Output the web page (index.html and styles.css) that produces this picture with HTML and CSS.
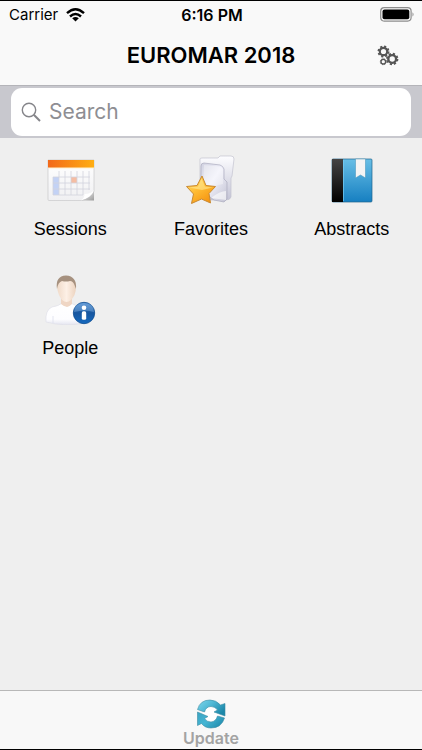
FILE: index.html
```html
<!DOCTYPE html>
<html lang="en">
<head>
    <meta charset="UTF-8">
    <meta name="viewport" content="width=device-width, initial-scale=1.0">
    <title>EUROMAR 2018</title>
    <link rel="stylesheet" href="styles.css">
</head>
<body>
    <div class="app">
        <header class="header">
            <div class="status-bar">
                <div class="carrier">
                    <span>Carrier</span>
                    <svg class="wifi" viewBox="0 0 19 14" aria-hidden="true">
                        <g fill="none" stroke="#000" stroke-width="2.4">
                            <path d="M1 5.2Q9.5-2.6 18 5.2"/>
                            <path d="M4 8.5Q9.5 3.4 15 8.5"/>
                        </g>
                        <path d="M6.2 10.3Q9.5 7.6 12.8 10.3L9.5 13.5Z"/>
                    </svg>
                </div>
                <span class="time">6:16 PM</span>
                <svg class="battery" viewBox="0 0 35 15" aria-hidden="true">
                    <rect x="0.7" y="0.7" width="30.4" height="13.4" rx="3.5" fill="none" stroke="#8d8d8d" stroke-width="1.2"/>
                    <rect x="2.5" y="2.5" width="26.8" height="9.8" rx="2"/>
                    <path d="M32.5 5.2Q34.6 7.4 32.5 9.7Z" fill="#8d8d8d"/>
                </svg>
            </div>
            <div class="title-bar">
                <h1>EUROMAR 2018</h1>
                <button class="settings-button" type="button" aria-label="Settings">
                    <svg viewBox="0 0 24 24" fill="none" stroke="#555" aria-hidden="true">
                        <circle cx="7.5" cy="7.5" r="3.7" stroke-width="2.2"/>
                        <circle cx="7.5" cy="7.5" r="5.1" stroke-width="1.8" stroke-dasharray="2.1 1.905"/>
                        <circle cx="16.2" cy="15" r="3.9" stroke-width="2.4"/>
                        <circle cx="16.2" cy="15" r="5.3" stroke-width="1.8" stroke-dasharray="2.2 1.963"/>
                        <circle cx="7.3" cy="17.7" r="2.3" stroke-width="1.3"/>
                        <circle cx="7.3" cy="17.7" r="3" stroke-width="1" stroke-dasharray="1.178 1.178"/>
                    </svg>
                </button>
            </div>
        </header>

        <form class="search-bar">
            <label class="search-field">
                <svg viewBox="0 0 20 20" fill="none" stroke="#85858a" aria-hidden="true">
                    <circle cx="8" cy="8" r="6.7" stroke-width="1.4"/>
                    <path d="M12.8 12.8L19 19" stroke-width="2"/>
                </svg>
                <input type="search" placeholder="Search" aria-label="Search">
            </label>
        </form>

        <main class="menu">
            <a class="menu-item" href="#sessions">
                <svg viewBox="0 0 52 52" aria-hidden="true">
                    <defs>
                        <linearGradient id="orange">
                            <stop offset="0" stop-color="#f2691a"/>
                            <stop offset="1" stop-color="#ffae12"/>
                        </linearGradient>
                        <linearGradient id="paper" x2="0" y2="1">
                            <stop offset="0" stop-color="#fff"/>
                            <stop offset="1" stop-color="#f0f0f2"/>
                        </linearGradient>
                        <linearGradient id="curl" x1="0" y1="0" x2="1" y2="1">
                            <stop offset="0" stop-color="#fff"/>
                            <stop offset="1" stop-color="#9a9a9a"/>
                        </linearGradient>
                    </defs>
                    <path d="M4 6H50V37Q49 44 38 46.5H5Q4 46.5 4 45.5Z" fill="url(#paper)" stroke="#c8c8ca" stroke-width="0.7"/>
                    <path d="M4 6H50V14H4Z" fill="url(#orange)"/>
                    <path d="M4 14H50" stroke="#fff0cc"/>
                    <path d="M9 23H15V41H9Z" fill="#c3d2f5"/>
                    <path d="M27 23H33V29H27Z" fill="#f5bda3"/>
                    <path d="M15 17V41M21 17V41M27 17V41M33 17V41M39 17V41M45 17V36M9 23H46M9 29H46M9 35H46M9 41H39M9 23V41" fill="none" stroke="#d2d3dd" stroke-width="0.8"/>
                    <path d="M50 36Q48 43 37 46.5Q41 43 40.5 40Q47 40 50 36Z" fill="#fff"/>
                    <path d="M50 37V46.5H37Q47 44 50 37Z" fill="url(#curl)"/>
                </svg>
                <span>Sessions</span>
            </a>
            <a class="menu-item" href="#favorites">
                <svg viewBox="0 0 52 52" aria-hidden="true">
                    <defs>
                        <linearGradient id="folder" x1="0" y1="0" x2="1" y2="1">
                            <stop offset="0" stop-color="#d0d1e0"/>
                            <stop offset="0.45" stop-color="#f0f0fa"/>
                            <stop offset="1" stop-color="#c2c2d2"/>
                        </linearGradient>
                        <linearGradient id="folder-back" x2="0" y2="1">
                            <stop offset="0" stop-color="#fdfdff"/>
                            <stop offset="1" stop-color="#c4c4d6"/>
                        </linearGradient>
                        <linearGradient id="star" x2="0.7" y2="1">
                            <stop offset="0" stop-color="#ffdf72"/>
                            <stop offset="0.5" stop-color="#ffbd35"/>
                            <stop offset="1" stop-color="#f5930f"/>
                        </linearGradient>
                    </defs>
                    <path d="M15 5Q15 4 17 4L33 4L35 2H46Q49 2 49 5L47 22L46 24V43Q45 46 41 46H24L15 35Z" fill="url(#folder-back)" stroke="#c3c3d0" stroke-width="0.7"/>
                    <path d="M19 9L35 11Q38 12 39 15V25L42 28V45L39 48L29 46L16 36V12Q16 9 19 9Z" fill="url(#folder)" stroke="#acacbf" stroke-width="0.7"/>
                    <path d="M19 11L34 12.5Q38 14 38 16V30Q26 32 18 38Z" fill="#fff" opacity="0.35"/>
                    <path d="M26 44Q35 37 41 37V46Z" fill="#fff" opacity="0.6"/>
                    <path d="M17 22L21 31.5L30.5 32.5L24 39.5L25.5 49L16.5 45L6.5 49.5L8.5 40L1.5 32.5L12 31.5Z" fill="url(#star)" stroke="#c98a33" stroke-width="1" stroke-linejoin="round"/>
                    <path d="M16.5 24.5L20 32.5L28 33.5L17 36L4 33.5L13 32.5Z" fill="#fff1a5" opacity="0.5"/>
                </svg>
                <span>Favorites</span>
            </a>
            <a class="menu-item" href="#abstracts">
                <svg viewBox="0 0 52 52" aria-hidden="true">
                    <defs>
                        <linearGradient id="cover" x2="0" y2="1">
                            <stop offset="0" stop-color="#68bfe6"/>
                            <stop offset="1" stop-color="#167fc1"/>
                        </linearGradient>
                        <linearGradient id="spine" x2="0" y2="1">
                            <stop offset="0" stop-color="#444"/>
                            <stop offset="1" stop-color="#000"/>
                        </linearGradient>
                    </defs>
                    <rect x="6" y="5" width="40" height="43" rx="1" fill="url(#cover)" stroke="#21658d" stroke-width="0.7"/>
                    <path d="M6 5H17V48H6Z" fill="url(#spine)"/>
                    <path d="M17.5 6V47" stroke="#78cdf4" stroke-width="0.7"/>
                    <path d="M29.5 5H39.5V24L34.5 21L29.5 24Z" fill="#f4f4f4" stroke="#3f91b8" stroke-width="0.5"/>
                </svg>
                <span>Abstracts</span>
            </a>
            <a class="menu-item" href="#people">
                <svg viewBox="0 0 52 52" aria-hidden="true">
                    <defs>
                        <linearGradient id="skin">
                            <stop offset="0" stop-color="#f0dac8"/>
                            <stop offset="0.5" stop-color="#fdf0e6"/>
                            <stop offset="1" stop-color="#ecd3bf"/>
                        </linearGradient>
                        <linearGradient id="shirt" x2="0" y2="1">
                            <stop offset="0" stop-color="#fff"/>
                            <stop offset="0.75" stop-color="#fdfdff"/>
                            <stop offset="1" stop-color="#e4e5f0"/>
                        </linearGradient>
                        <linearGradient id="info" x2="0" y2="1">
                            <stop offset="0" stop-color="#4b88cd"/>
                            <stop offset="0.5" stop-color="#17569f"/>
                            <stop offset="1" stop-color="#1469bf"/>
                        </linearGradient>
                    </defs>
                    <path d="M2 49Q1 37 8 34Q15 33 18 30H27Q31 33 37 34Q42 38 42 50Q20 54 2 49Z" fill="url(#shirt)" stroke="#dedee8" stroke-width="0.6"/>
                    <path d="M9 43V50" stroke="#dcdeec" stroke-width="0.8"/>
                    <path d="M17 25H28V31Q25 34 23 34Q19 33 17 31Z" fill="#efd6c4"/>
                    <path d="M13 13Q13 4 22.5 4Q32 4 32 13Q32 18 30.5 22Q27 29 22.5 29Q18 29 15 22Q13 17 13 13Z" fill="url(#skin)"/>
                    <path d="M13 16Q11 3 22 2.5Q33 3 32 16L30.5 12Q29 8 26 8Q22 9 18 8Q14 9 13 16Z" fill="#a6917f"/>
                    <circle cx="40" cy="40" r="10.7" fill="url(#info)" stroke="#0e4c91" stroke-width="0.8"/>
                    <path d="M30 39Q30 30 40 30Q50 30 50 39Q41 36 30 39Z" fill="#9cc5ef" opacity="0.35"/>
                    <circle cx="40" cy="34.8" r="2.3" fill="#fff"/>
                    <rect x="37.8" y="38.3" width="4.4" height="8.5" rx="1.6" fill="#fff"/>
                </svg>
                <span>People</span>
            </a>
        </main>

        <footer class="toolbar">
            <button class="update-button" type="button">
                <svg viewBox="0 0 32 32" aria-hidden="true">
                    <defs>
                        <linearGradient id="refresh-top" x2="1" y2="0.6">
                            <stop offset="0" stop-color="#7fd8ec"/>
                            <stop offset="0.5" stop-color="#4fb7d4"/>
                            <stop offset="1" stop-color="#1b87a9"/>
                        </linearGradient>
                        <linearGradient id="refresh-bottom" x2="1" y2="0.6">
                            <stop offset="0" stop-color="#3aa3c2"/>
                            <stop offset="0.5" stop-color="#45b5d3"/>
                            <stop offset="1" stop-color="#2590b1"/>
                        </linearGradient>
                    </defs>
                    <circle cx="16" cy="16" r="8" fill="#fff"/>
                    <g stroke="#3a8ba3" stroke-width="0.6" stroke-linejoin="round">
                        <path d="M2.5 11.5Q5 2 15 2Q21 2 25.500 7L30 5.5V18L19 14L22.5 12Q20 8.500 16 8.5Q11 8.5 9.5 14Z" fill="url(#refresh-top)"/>
                        <path d="M29.5 20Q26.500 30 16 30Q10 30 6.500 25.500L2.5 27.500V14L13 18.500L9.500 20.500Q12 24 16 24Q21 23.500 22.500 18Z" fill="url(#refresh-bottom)"/>
                    </g>
                </svg>
                <span>Update</span>
            </button>
        </footer>
    </div>
</body>
</html>
```

FILE: styles.css
```css
* {
    box-sizing: border-box;
}
body {
    margin: 0;
    background-color: #efefef;
    color: #000;
    font-family: Inter, "Liberation Sans", sans-serif;
}
button {
    border: none;
    background: none;
    padding: 0;
    cursor: pointer;
}
svg {
    display: block;
}
.app {
    display: flex;
    flex-direction: column;
    min-height: 100vh;
    border-top: 1px solid #000;
    border-bottom: 1px solid #000;
}
.header {
    background-color: #f9f9f9;
    border-bottom: 1px solid #b4b4b9;
}
.status-bar {
    display: grid;
    grid-template-columns: 1fr auto 1fr;
    align-items: center;
    height: 27px;
    padding: 0 7px 0 9px;
    font-size: 16px;
}
.carrier {
    display: flex;
    align-items: center;
    gap: 8px;
    font-size: 15px;
}
.wifi {
    width: 19px;
    height: 14px;
}
.time {
    font-weight: 600;
}
.battery {
    justify-self: end;
    width: 35px;
    height: 15px;
}
.title-bar {
    display: grid;
    grid-template-columns: 1fr auto 1fr;
    align-items: center;
    padding: 14px 22px 16px;
}
.title-bar h1 {
    grid-column: 2;
    margin: 0;
    font-size: 22px;
    font-weight: 600;
    line-height: 27px;
}
.settings-button {
    justify-self: end;
}
.settings-button svg {
    width: 24px;
    height: 24px;
}
.search-bar {
    padding: 2px 11px;
    background-color: #c8c8ce;
}
.search-field {
    display: flex;
    align-items: center;
    gap: 8px;
    height: 48px;
    padding: 0 10px 1px;
    border-radius: 11px;
    background-color: #fff;
}
.search-field svg {
    flex: none;
    width: 20px;
    height: 20px;
}
.search-field input {
    flex: 1;
    min-width: 0;
    padding: 0;
    border: none;
    outline: none;
    background: none;
    font-family: inherit;
    font-size: 21px;
    appearance: none;
}
.search-field input::placeholder {
    color: #8e8e93;
}
.menu {
    flex: 1;
    display: grid;
    grid-template-columns: repeat(3, 1fr);
    align-content: start;
    row-gap: 32px;
    padding: 16px 0;
}
.menu-item {
    display: flex;
    flex-direction: column;
    align-items: center;
    gap: 12px;
    color: #000;
    font-family: "Liberation Sans", Arial, sans-serif;
    font-size: 18px;
    line-height: 23px;
    text-decoration: none;
}
.menu-item svg {
    width: 52px;
    height: 52px;
}
.toolbar {
    display: flex;
    justify-content: center;
    padding: 7px 0 2px;
    border-top: 1px solid #b8b8b8;
    background-color: #f8f8f8;
}
.update-button {
    display: flex;
    flex-direction: column;
    align-items: center;
    color: #a3a3a3;
    font-family: Inter, "Liberation Sans", sans-serif;
    font-size: 16px;
    font-weight: 600;
    line-height: 17px;
}
.update-button svg {
    width: 32px;
    height: 32px;
}
```
